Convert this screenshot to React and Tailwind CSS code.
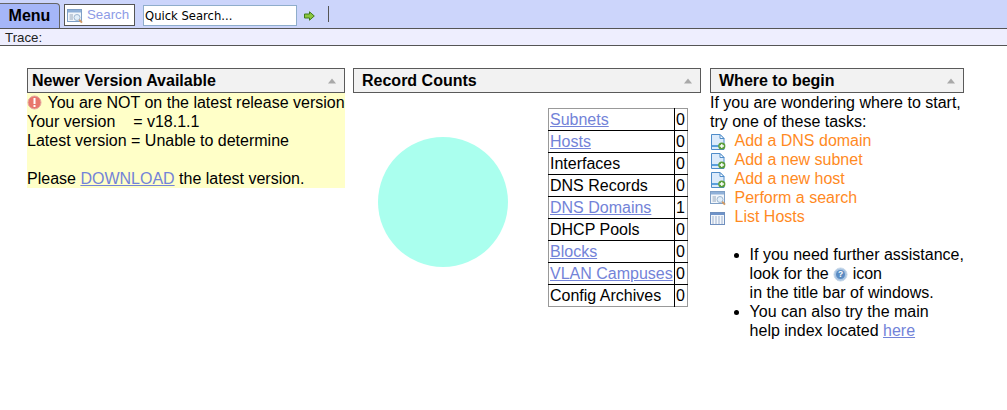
import React from "react";

const linkCls = "text-[#7383d8] underline";

const PageAddIcon = () => (
    <svg width="16" height="16" viewBox="0 0 16 16" className="shrink-0">
        <path d="M1.5 .5H10L14 4.5V15.5H1.5Z" fill="#dcebfb" stroke="#4f8cc9" />
        <path d="M10 .5V4.5H14Z" fill="#fff" stroke="#4f8cc9" />
        <rect x="2" y="11" width="11" height="2" fill="#5aa0dc" />
        <circle cx="11.8" cy="12" r="3.6" fill="#5a9e3a" />
        <path d="M11.8 9.9V14.1M9.7 12H13.9" stroke="#fff" strokeWidth="1.3" />
    </svg>
);

const SearchIcon = () => (
    <svg width="17" height="16" viewBox="0 0 17 16" className="shrink-0">
        <rect x=".5" y=".5" width="14" height="12" fill="#f2f6fb" stroke="#7f9fc6" />
        <rect x="1" y="1" width="13" height="2.5" fill="#8fb0d8" />
        <path d="M2.5 6H6M2.5 8H6M2.5 10H6" stroke="#93a5ba" />
        <circle cx="10" cy="8.5" r="3" fill="#e2eef9" stroke="#9db6d0" />
        <path d="M12.2 10.8L15 13.6" stroke="#d09a66" strokeWidth="2" />
    </svg>
);

const ListIcon = () => (
    <svg width="16" height="16" viewBox="0 0 16 16" className="shrink-0">
        <rect x=".5" y="2.5" width="14" height="12" fill="#f4f7fb" stroke="#6f8fbe" />
        <rect x="1" y="3" width="13" height="2" fill="#6f93c9" />
        <path d="M2 7H13M2 9H13M2 11H13M2 13H13" stroke="#9fb2cf" />
        <path d="M4.5 6V14M7.5 6V14M10.5 6V14" stroke="#f4f7fb" />
    </svg>
);

const Collapse = () => (
    <svg width="8" height="6" viewBox="0 0 8 6" className="shrink-0">
        <path d="M4 .5L8 5.5H0Z" fill="#a9a9a9" />
    </svg>
);

const Panel = ({ title, width, titlePad, children }) => (
    <div className={width}>
        <div className={`flex h-[25px] items-center justify-between border border-[#5a5a5a] bg-[#f2f2f2] pr-[8px] ${titlePad}`}>
            <span className="text-[16px] font-bold text-black">{title}</span>
            <Collapse />
        </div>
        {children}
    </div>
);

const counts = [
    ["Subnets", 0, true],
    ["Hosts", 0, true],
    ["Interfaces", 0, false],
    ["DNS Records", 0, false],
    ["DNS Domains", 1, true],
    ["DHCP Pools", 0, false],
    ["Blocks", 0, true],
    ["VLAN Campuses", 0, true],
    ["Config Archives", 0, false],
];

const tasks = [
    ["Add a DNS domain", PageAddIcon],
    ["Add a new subnet", PageAddIcon],
    ["Add a new host", PageAddIcon],
    ["Perform a search", SearchIcon],
    ["List Hosts", ListIcon],
];

const App = () => {
    return (
        <div className="h-[410px] bg-white font-['Liberation_Sans',sans-serif] text-[16px] leading-[19px] text-black">
            <div className="flex h-[29px] items-start border-b border-[#555] bg-[#ccd5fb]">
                <div className="mt-[3px] flex h-[25px] w-[60px] items-center justify-center rounded-tr-[4px] border-r border-t border-[#666] bg-[#a5b6f8] pb-[2px] text-[16px] font-bold">
                    Menu
                </div>
                <div className="ml-[4px] mt-[4px] flex h-[22px] w-[71px] items-start gap-[3px] border border-[#555] bg-white pl-[2px] text-[13.3px] text-[#8d9be6]">
                    <span className="mt-[4px] flex">
                        <SearchIcon />
                    </span>
                    <span className="leading-[20px]">Search</span>
                </div>
                <div className="ml-[8px] mt-[5px] flex h-[21px] w-[154px] items-center border border-[#8fadcb] bg-white pl-[1px] pt-px font-['DejaVu_Sans',sans-serif] text-[11.6px] text-black">
                    Quick Search...
                </div>
                <svg width="11" height="10" viewBox="0 0 11 10" className="ml-[7px] mt-[11px]">
                    <path d="M.5 3H5.5V.8L10.3 5L5.5 9.2V7H.5Z" fill="#8cc63f" stroke="#3f7d1e" />
                </svg>
                <div className="ml-[13px] mt-[6px] h-[16px] w-px bg-[#555]" />
            </div>
            <div className="h-[17px] border-b border-[#555] bg-[#eeeefe] pl-[5px] text-[13.3px] leading-[18px] text-[#222]">
                Trace:
            </div>

            <div className="flex items-start pl-[27px] pt-[22px]">
                <Panel title="Newer Version Available" width="w-[318px]" titlePad="pl-[4px]">
                    <div className="h-[95px] bg-[#ffffc8] whitespace-pre">
                        <div className="flex items-center">
                            <svg width="15" height="15" viewBox="0 0 15 15" className="mr-[5.5px] shrink-0">
                                <circle cx="7.5" cy="7.5" r="6.5" fill="#e8766c" stroke="#e5a9a2" />
                                <rect x="6.5" y="3" width="2" height="6" fill="#fff" />
                                <rect x="6.5" y="10" width="2" height="2" fill="#fff" />
                            </svg>
                            <span>You are NOT on the latest release version</span>
                        </div>
                        <div>Your version{"    "}= v18.1.1</div>
                        <div>Latest version = Unable to determine</div>
                        <div className="h-[19px]" />
                        <div>
                            Please <a className={linkCls}>DOWNLOAD</a> the latest version.
                        </div>
                    </div>
                </Panel>

                <Panel title="Record Counts" width="ml-[8px] w-[348px]" titlePad="pl-[8px]">
                    <div className="flex items-start pl-[25px]">
                        <svg width="130" height="130" viewBox="0 0 130 130" className="mt-[44px] shrink-0">
                            <circle cx="65" cy="65" r="65" fill="#aaffee" />
                        </svg>
                        <table className="ml-[40px] mt-[15px] w-[140px] border-collapse border border-[#999]">
                            <tbody>
                                {counts.map(([label, value, isLink]) => (
                                    <tr key={label} className="h-[22px] border-t border-black first:border-t-0">
                                        <td className="whitespace-nowrap p-0 pl-px">
                                            {isLink ? <a className={linkCls}>{label}</a> : label}
                                        </td>
                                        <td className="w-[13px] border-l border-black p-0 pl-px">{value}</td>
                                    </tr>
                                ))}
                            </tbody>
                        </table>
                    </div>
                </Panel>

                <Panel title="Where to begin" width="ml-[9px] w-[254px]" titlePad="pl-[8px]">
                    <div className="whitespace-nowrap">
                        <div>If you are wondering where to start,</div>
                        <div>try one of these tasks:</div>
                        {tasks.map(([label, Icon]) => (
                            <div key={label} className="flex h-[19px] items-end">
                                <span className="flex w-[24.5px]">
                                    <Icon />
                                </span>
                                <a className="text-[#ff8a1f]">{label}</a>
                            </div>
                        ))}
                        <ul className="ml-[39.6px] mt-[19px] list-disc">
                            <li>
                                If you need further assistance,
                                <br />
                                look for the{" "}
                                <svg width="15" height="15" viewBox="0 0 16 16" className="inline align-[-3px]">
                                    <circle cx="8" cy="8" r="7" fill="#a9c5e3" stroke="#c9d9ea" />
                                    <circle cx="8" cy="8" r="4.8" fill="#5a8bc2" />
                                    <text x="8" y="11" textAnchor="middle" fontSize="9" fontWeight="bold" fill="#fff">?</text>
                                </svg>{" "}
                                icon
                                <br />
                                in the title bar of windows.
                            </li>
                            <li>
                                You can also try the main
                                <br />
                                help index located <a className={linkCls}>here</a>
                            </li>
                        </ul>
                    </div>
                </Panel>
            </div>
        </div>
    );
};

export default App;
